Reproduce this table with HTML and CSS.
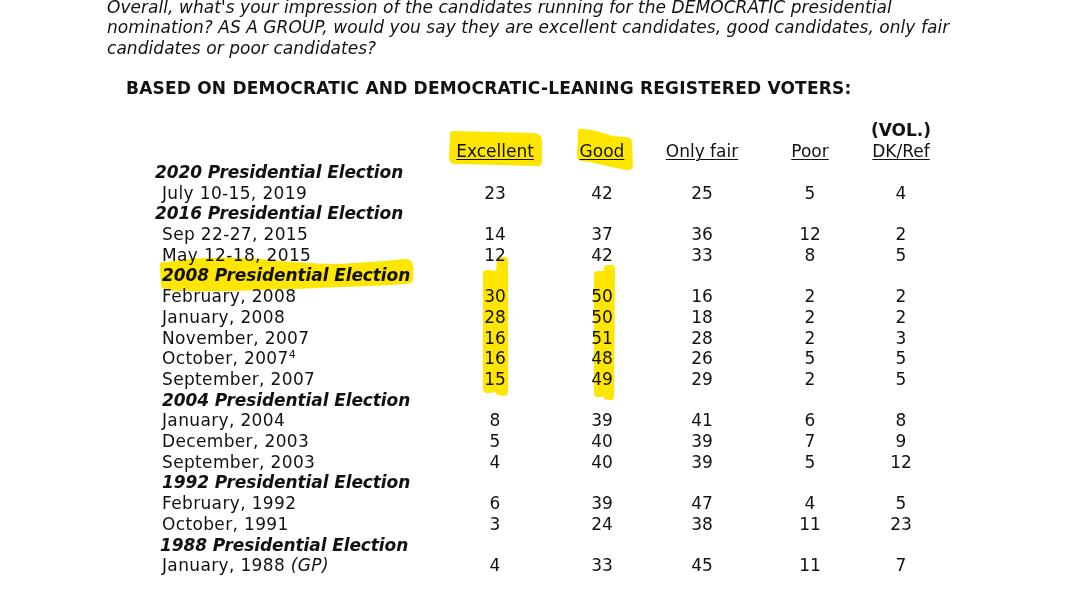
FILE: index.html
```html
<!DOCTYPE html>
<html lang="en">
<head>
<meta charset="utf-8">
<title>Impression of Democratic candidates</title>
<link rel="stylesheet" href="styles.css">
</head>
<body>
<div class="page">
  <p class="question">Overall, what's your impression of the candidates running for the DEMOCRATIC presidential<br>nomination? AS A GROUP, would you say they are excellent candidates, good candidates, only fair<br>candidates or poor candidates?</p>

  <h2 class="base">BASED ON DEMOCRATIC AND DEMOCRATIC-LEANING REGISTERED VOTERS:</h2>

  <div class="table">
    <div class="lab head-row"></div>
    <div class="e head-row"><span class="u">Excellent</span></div>
    <div class="g head-row"><span class="u">Good</span></div>
    <div class="f head-row"><span class="u">Only fair</span></div>
    <div class="p head-row"><span class="u">Poor</span></div>
    <div class="d head-row"><b class="vol">(VOL.)</b><br><span class="u">DK/Ref</span></div>

    <div class="lab sec sec-wide">2020 Presidential Election</div>
    <div class="lab">July 10-15, 2019</div><div class="e">23</div><div class="g">42</div><div class="f">25</div><div class="p">5</div><div class="d">4</div>

    <div class="lab sec sec-wide">2016 Presidential Election</div>
    <div class="lab">Sep 22-27, 2015</div><div class="e">14</div><div class="g">37</div><div class="f">36</div><div class="p">12</div><div class="d">2</div>
    <div class="lab">May 12-18, 2015</div><div class="e">12</div><div class="g">42</div><div class="f">33</div><div class="p">8</div><div class="d">5</div>

    <div class="lab sec">2008 Presidential Election</div>
    <div class="lab">February, 2008</div><div class="e">30</div><div class="g">50</div><div class="f">16</div><div class="p">2</div><div class="d">2</div>
    <div class="lab">January, 2008</div><div class="e">28</div><div class="g">50</div><div class="f">18</div><div class="p">2</div><div class="d">2</div>
    <div class="lab">November, 2007</div><div class="e">16</div><div class="g">51</div><div class="f">28</div><div class="p">2</div><div class="d">3</div>
    <div class="lab">October, 2007<sup>4</sup></div><div class="e">16</div><div class="g">48</div><div class="f">26</div><div class="p">5</div><div class="d">5</div>
    <div class="lab">September, 2007</div><div class="e">15</div><div class="g">49</div><div class="f">29</div><div class="p">2</div><div class="d">5</div>

    <div class="lab sec">2004 Presidential Election</div>
    <div class="lab">January, 2004</div><div class="e">8</div><div class="g">39</div><div class="f">41</div><div class="p">6</div><div class="d">8</div>
    <div class="lab">December, 2003</div><div class="e">5</div><div class="g">40</div><div class="f">39</div><div class="p">7</div><div class="d">9</div>
    <div class="lab">September, 2003</div><div class="e">4</div><div class="g">40</div><div class="f">39</div><div class="p">5</div><div class="d">12</div>

    <div class="lab sec">1992 Presidential Election</div>
    <div class="lab">February, 1992</div><div class="e">6</div><div class="g">39</div><div class="f">47</div><div class="p">4</div><div class="d">5</div>
    <div class="lab">October, 1991</div><div class="e">3</div><div class="g">24</div><div class="f">38</div><div class="p">11</div><div class="d">23</div>

    <div class="lab sec sec-mid">1988 Presidential Election</div>
    <div class="lab">January, 1988 <i>(GP)</i></div><div class="e">4</div><div class="g">33</div><div class="f">45</div><div class="p">11</div><div class="d">7</div>
  </div>

  <svg class="marker" width="1071" height="609" viewBox="0 0 1071 609" aria-hidden="true">
    <g fill="#ffe600">
      <path d="M450,134 Q449,131 456,131 L534,133 Q542,134 542,140 L542,162 Q542,167 535,166 L456,164 Q449,164 449,158 Z"/>
      <path d="M578,132 Q577,128 584,129 Q600,131 612,136 L627,137 Q632,137 632,143 L633,165 Q633,171 626,170 Q606,166 590,162 L582,161 Q577,161 577,155 Z"/>
      <path d="M160,265 Q158,262 166,262 Q185,259 205,258 Q240,257 270,260 Q300,263 335,264 Q375,262 405,259 Q413,259 413,266 L413,280 Q413,284 405,284 Q380,286 340,287 Q300,289 260,290 Q220,292 185,291 Q165,291 161,287 Z"/>
      <path d="M483,272 Q483,270 488,270 L496,271 L497,260 Q497,257 502,257 L506,257 Q508,258 508,262 L508,391 Q508,396 503,396 L498,395 Q496,395 496,392 L489,393 Q483,394 483,388 Z"/>
      <path d="M594,275 Q594,271 599,271 L604,271 L604,268 Q604,265 609,265 L613,265 Q615,266 615,270 L614,396 Q614,401 609,400 L604,399 L604,396 Q600,398 597,397 Q594,397 594,392 Z"/>
    </g>
  </svg>
</div>
</body>
</html>
```

FILE: styles.css
```css
html, body {
  margin: 0;
  padding: 0;
  background: #ffffff;
}

body {
  font-family: "DejaVu Sans", Verdana, sans-serif;
  font-size: 17px;
  color: #121212;
  overflow: hidden;
}

.page {
  position: relative;
  width: 1071px;
  height: 609px;
  overflow: hidden;
}

.question {
  margin: -3px 0 0 107px;
  font-style: italic;
  letter-spacing: 0.05px;
  line-height: 20.3px;
}

.base {
  margin: 20px 0 0 126px;
  font-size: 17px;
  font-weight: bold;
  letter-spacing: 0.2px;
  line-height: 20.6px;
}

.table {
  display: grid;
  grid-template-columns: 300px 80px 27px 80px 20px 80px 28px 80px 11px 80px;
  margin: 22px 0 0 155px;
  line-height: 20.7px;
  align-items: end;
}

.lab {
  grid-column: 1;
  padding-left: 7px;
  white-space: nowrap;
  letter-spacing: 0.35px;
}
.e { grid-column: 2; text-align: center; }
.g { grid-column: 4; text-align: center; }
.f { grid-column: 6; text-align: center; }
.p { grid-column: 8; text-align: center; }
.d { grid-column: 10; text-align: center; white-space: nowrap; }

.sec {
  font-weight: bold;
  font-style: italic;
  letter-spacing: -0.1px;
}

.sec-wide { padding-left: 0; }
.sec-mid { padding-left: 5px; }

.u {
  text-decoration: underline;
  text-decoration-thickness: 1px;
  text-underline-offset: 2px;
}

.vol { font-weight: bold; }

sup {
  font-size: 11px;
  line-height: 0;
  vertical-align: 6px;
}

.marker {
  position: absolute;
  left: 0;
  top: 0;
  mix-blend-mode: multiply;
  pointer-events: none;
}
```
